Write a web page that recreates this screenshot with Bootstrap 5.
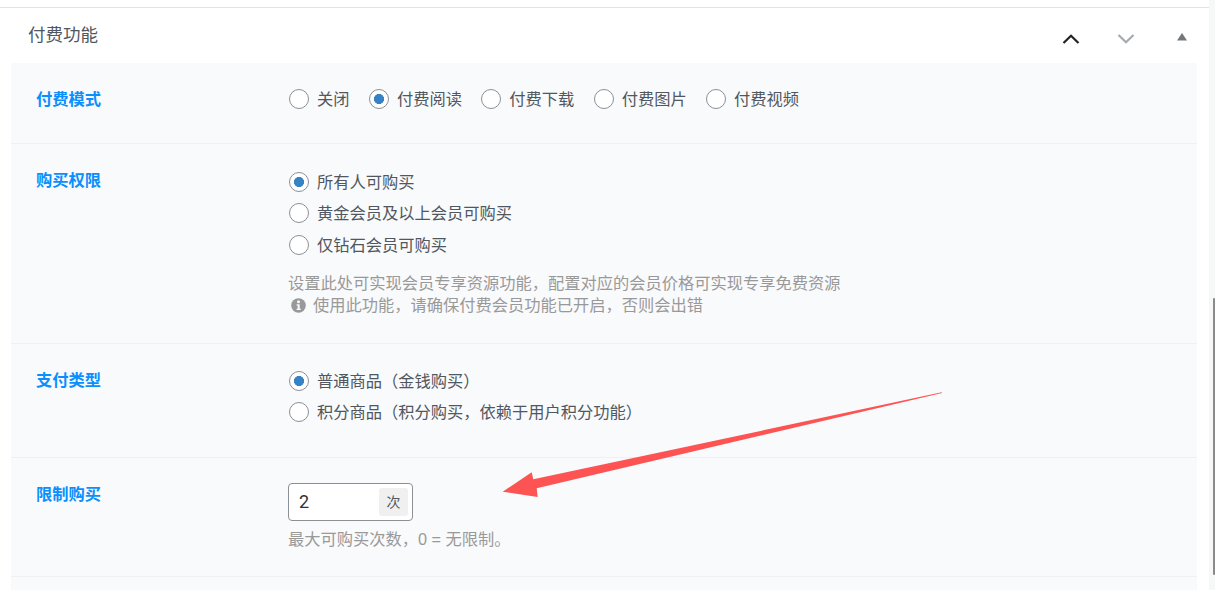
<!DOCTYPE html>
<html lang="zh"><head><meta charset="utf-8"><title>付费功能</title>
<link href="https://cdn.jsdelivr.net/npm/bootstrap@5.3.0/dist/css/bootstrap.min.css" rel="stylesheet">
<style>
html,body{height:590px;overflow:hidden;background:#f6f7f7}
body{font-family:"Liberation Sans","Noto Sans CJK SC",sans-serif;font-size:16.25px;color:#50575e;position:relative}
.panel-box{width:1209px;height:590px;background:#fff;padding-top:7px;overflow:hidden}
.panel-line{border-top:1px solid #e2e3e4}
.panel-head{height:55px;padding:0 11px 0 28px}
.panel-title{font-size:17.5px;line-height:54px;color:#50575e}
.ctl-btn{width:55px;height:30px;margin-top:14px;padding:0;background:none;border:0}
.ctl-sort{width:45px;height:30px;margin-top:14px;padding:0;text-align:right;background:none;border:0}
.ctl-sort svg{margin:0 11px 3px 0}
.meta-area{margin:0 12px 0 11px;background:#f9fafc}
.meta-row{border-bottom:1px solid #eef0f2;padding:25px 25px 0}
.row-one{height:81px}
.row-two{height:200px}
.row-three{height:114px}
.row-four{height:119px}
.row-five{height:40px}
.meta-label{width:252px;font-size:16.25px;font-weight:700;color:#0a8ffc;line-height:24px;flex:none;margin-top:-1px}
.radio-item{display:flex;align-items:center;margin:0;line-height:24px;color:#50575e}
.radio-item .form-check-input{width:20px;height:20px;margin:0 8px 0 1px;flex:none;background-color:#fff;border:1px solid #8c8f94;float:none}
.radio-item .form-check-input:checked{background-color:#fff;border-color:#8c8f94;background-image:radial-gradient(circle,#3582c4 0,#3582c4 4.8px,transparent 5.3px)}
.radio-row{gap:18.4px;height:24px;margin-top:-1px}
.radio-col{gap:7.4px;margin-top:1px}
.row-three .radio-col{margin-top:0}
.help-text{color:#999;line-height:23px}
.help-top{margin-top:15.4px}
.help-second{margin-top:-1px}
.info-ico{margin:0 7px 0 3px;vertical-align:-2px}
.num-box{width:125px;height:38px;border:1px solid #8c8f94;border-radius:4px;background:#fff;padding:0 4px 0 10px}
.num-val{color:#2c3338;font-family:"Roboto",sans-serif;font-size:18px;line-height:36px}
.num-unit{width:29px;height:28px;background:#f0f0f1;border-radius:3px;font-size:14px;line-height:28px;text-align:center}
.help-num{margin-top:7px}
.arrow-layer{position:absolute;left:0;top:0;pointer-events:none}
.bar-thumb{position:absolute;left:1213px;top:298px;width:2px;height:277px;background:#8a8a8a;border-radius:1px}
</style></head>
<body>
<div class="panel-box">
  <div class="panel-line"></div>
  <div class="panel-head d-flex align-items-start">
    <div class="panel-title flex-grow-1">付费功能</div>
    <button class="ctl-btn" type="button" aria-label="上移"><svg width="18" height="10" viewBox="0 0 18 10"><path d="M1.5 9 9 1.8 16.5 9" fill="none" stroke="#1d2327" stroke-width="2.2"/></svg></button>
    <button class="ctl-btn" type="button" aria-label="下移"><svg width="18" height="10" viewBox="0 0 18 10"><path d="M1.5 1 9 8.2 16.5 1" fill="none" stroke="#a7aaad" stroke-width="2.2"/></svg></button>
    <button class="ctl-sort" type="button" aria-label="折叠"><svg width="10" height="8" viewBox="0 0 10 8"><path d="M5 0 10 7.500H0Z" fill="#72777c"/></svg></button>
  </div>
  <div class="meta-area">
    <div class="meta-row row-one d-flex">
      <div class="meta-label">付费模式</div>
      <div class="radio-row d-flex">
        <label class="radio-item"><input class="form-check-input" type="radio" name="m1">关闭</label>
        <label class="radio-item"><input class="form-check-input" type="radio" name="m1" checked>付费阅读</label>
        <label class="radio-item"><input class="form-check-input" type="radio" name="m1">付费下载</label>
        <label class="radio-item"><input class="form-check-input" type="radio" name="m1">付费图片</label>
        <label class="radio-item"><input class="form-check-input" type="radio" name="m1">付费视频</label>
      </div>
    </div>
    <div class="meta-row row-two d-flex">
      <div class="meta-label">购买权限</div>
      <div>
        <div class="radio-col d-flex flex-column">
          <label class="radio-item"><input class="form-check-input" type="radio" name="m2" checked>所有人可购买</label>
          <label class="radio-item"><input class="form-check-input" type="radio" name="m2">黄金会员及以上会员可购买</label>
          <label class="radio-item"><input class="form-check-input" type="radio" name="m2">仅钻石会员可购买</label>
        </div>
        <div class="help-text help-top">设置此处可实现会员专享资源功能，配置对应的会员价格可实现专享免费资源</div>
        <div class="help-text help-second"><svg class="info-ico" width="15" height="15" viewBox="0 0 14 14"><circle cx="7" cy="7" r="6.800" fill="#999"/><circle cx="7" cy="3.600" r="1.400" fill="#f9fafc"/><path d="M5.200 5.800h2.900v4.200h1v1.300H5.200V10h1V7.100h-1Z" fill="#f9fafc"/></svg>使用此功能，请确保付费会员功能已开启，否则会出错</div>
      </div>
    </div>
    <div class="meta-row row-three d-flex">
      <div class="meta-label">支付类型</div>
      <div class="radio-col d-flex flex-column">
        <label class="radio-item"><input class="form-check-input" type="radio" name="m3" checked>普通商品（金钱购买）</label>
        <label class="radio-item"><input class="form-check-input" type="radio" name="m3">积分商品（积分购买，依赖于用户积分功能）</label>
      </div>
    </div>
    <div class="meta-row row-four d-flex">
      <div class="meta-label">限制购买</div>
      <div>
        <div class="num-box d-flex align-items-center justify-content-between">
          <span class="num-val">2</span><span class="num-unit">次</span>
        </div>
        <div class="help-text help-num">最大可购买次数，0 = 无限制。</div>
      </div>
    </div>
    <div class="meta-row row-five"></div>
  </div>
</div>
<svg class="arrow-layer" width="1215" height="590" viewBox="0 0 1215 590"><polygon points="941.700,392.300 533.300,479.300 531.700,472.300 502.700,491.700 537.700,497 536.700,488.300 942,393" fill="#fd5353"/></svg>
<div class="bar-thumb"></div>
</body></html>
